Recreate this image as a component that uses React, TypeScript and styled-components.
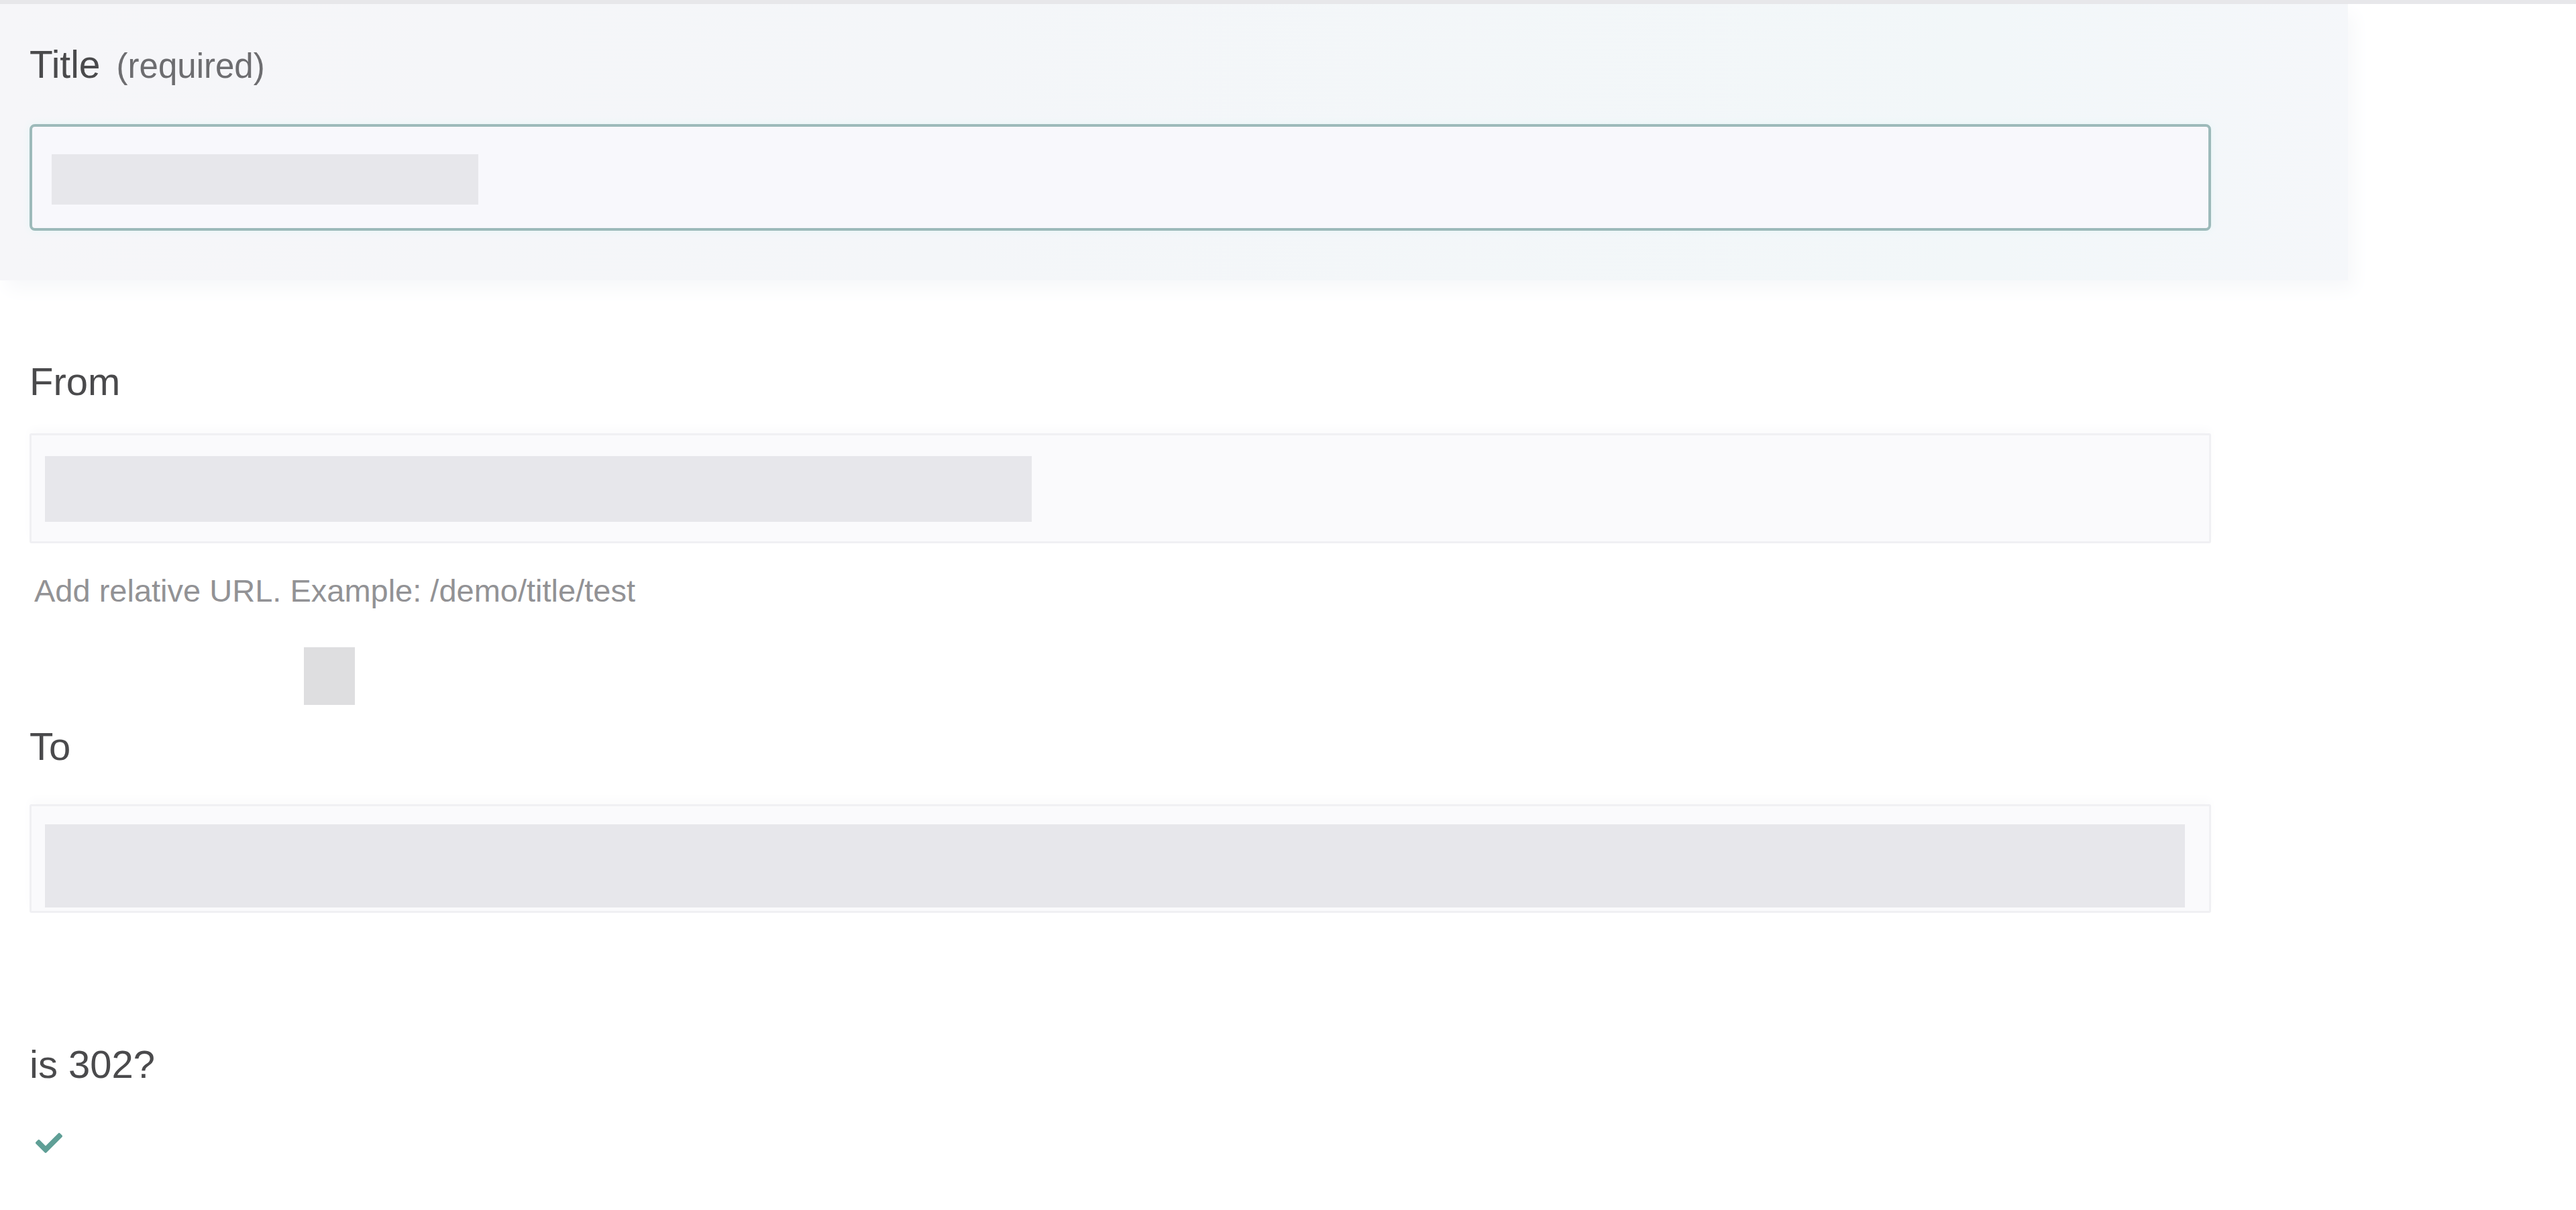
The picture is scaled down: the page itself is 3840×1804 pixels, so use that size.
import React from 'react';
import styled, { createGlobalStyle } from 'styled-components';
import { FaCheck } from 'react-icons/fa';

const GlobalStyle = createGlobalStyle`
  html, body {
    margin: 0;
    padding: 0;
    background: #ffffff;
  }
  body {
    font-family: "Liberation Sans", Arial, sans-serif;
    color: #4b4b4d;
  }
`;

export default function App() {
  return (
    <>
      <GlobalStyle />
      <Page>
        <TopRule />
        <TitlePanel>
          <Label size={57}>
            Title
            <Required>(required)</Required>
          </Label>
          <InputBox focused top={182 - 130} height={159}>
            <Redacted width={636} height={75} offsetTop={41} offsetLeft={29} />
          </InputBox>
        </TitlePanel>

        <Section>
          <Label top={537 - 415 - 6}>From</Label>
          <InputBox top={649 - 607} height={164}>
            <Redacted width={1471} height={98} offsetTop={31} offsetLeft={20} />
          </InputBox>
          <Hint>Add relative URL. Example: /demo/title/test</Hint>
          <Marker />

          <Label top={27}>To</Label>
          <InputBox top={51} height={162}>
            <Redacted width={3190} height={124} offsetTop={27} offsetLeft={20} />
          </InputBox>

          <Label top={191}>is 302?</Label>
          <CheckIcon>
            <FaCheck size={40} />
          </CheckIcon>
        </Section>
      </Page>
    </>
  );
}

const Page = styled.div`
  width: 3840px;
  min-height: 1804px;
  background: #ffffff;
  overflow: hidden;
`;

const TopRule = styled.div`
  position: relative;
  z-index: 1;
  height: 6px;
  background: #e7e7ea;
`;

const TitlePanel = styled.div`
  width: 3500px;
  box-sizing: border-box;
  padding: 56px 204px 74px 44px;
  background: linear-gradient(90deg, #f6f6f9 0%, #f4f6f9 40%, #f2f7f9 85%, #f5f7fa 100%);
  box-shadow: 10px 14px 26px 0 #f7f8fa;
`;

const Section = styled.div`
  padding: 0 544px 0 44px;
  display: flex;
  flex-direction: column;
  align-items: flex-start;
`;

const Label = styled.div<{ size?: number; top?: number }>`
  margin-top: ${(p) => p.top ?? 0}px;
  font-size: ${(p) => p.size ?? 58}px;
  line-height: ${(p) => Math.round((p.size ?? 58) * 1.2)}px;
  color: #4a4a4c;
  white-space: nowrap;
`;

const Required = styled.span`
  margin-left: 24px;
  font-size: 51px;
  color: #6d6d70;
`;

const InputBox = styled.div<{ focused?: boolean; top: number; height: number }>`
  align-self: stretch;
  box-sizing: border-box;
  margin-top: ${(p) => p.top}px;
  height: ${(p) => p.height}px;
  border: ${(p) => (p.focused ? '4px solid #9dbaba' : '3px solid #f0f0f3')};
  border-radius: ${(p) => (p.focused ? 8 : 3)}px;
  background: ${(p) => (p.focused ? '#f8f8fc' : '#fafafc')};
  box-shadow: ${(p) => (p.focused ? '0 0 12px #e6f6f7' : '0 -8px 14px #fbfbfc')};
`;

const Redacted = styled.div<{ width: number; height: number; offsetTop: number; offsetLeft: number }>`
  width: ${(p) => p.width}px;
  height: ${(p) => p.height}px;
  margin-top: ${(p) => p.offsetTop}px;
  margin-left: ${(p) => p.offsetLeft}px;
  background: #e7e7eb;
`;

const Hint = styled.div`
  margin-top: 43px;
  margin-left: 7px;
  font-size: 47px;
  line-height: 56px;
  color: #929295;
  white-space: nowrap;
`;

const Marker = styled.div`
  margin-top: 56px;
  margin-left: 409px;
  width: 76px;
  height: 86px;
  background: #dedee0;
`;

const CheckIcon = styled.div`
  margin-top: 62px;
  margin-left: 9px;
  color: #5f9f96;
  line-height: 0;
`;
